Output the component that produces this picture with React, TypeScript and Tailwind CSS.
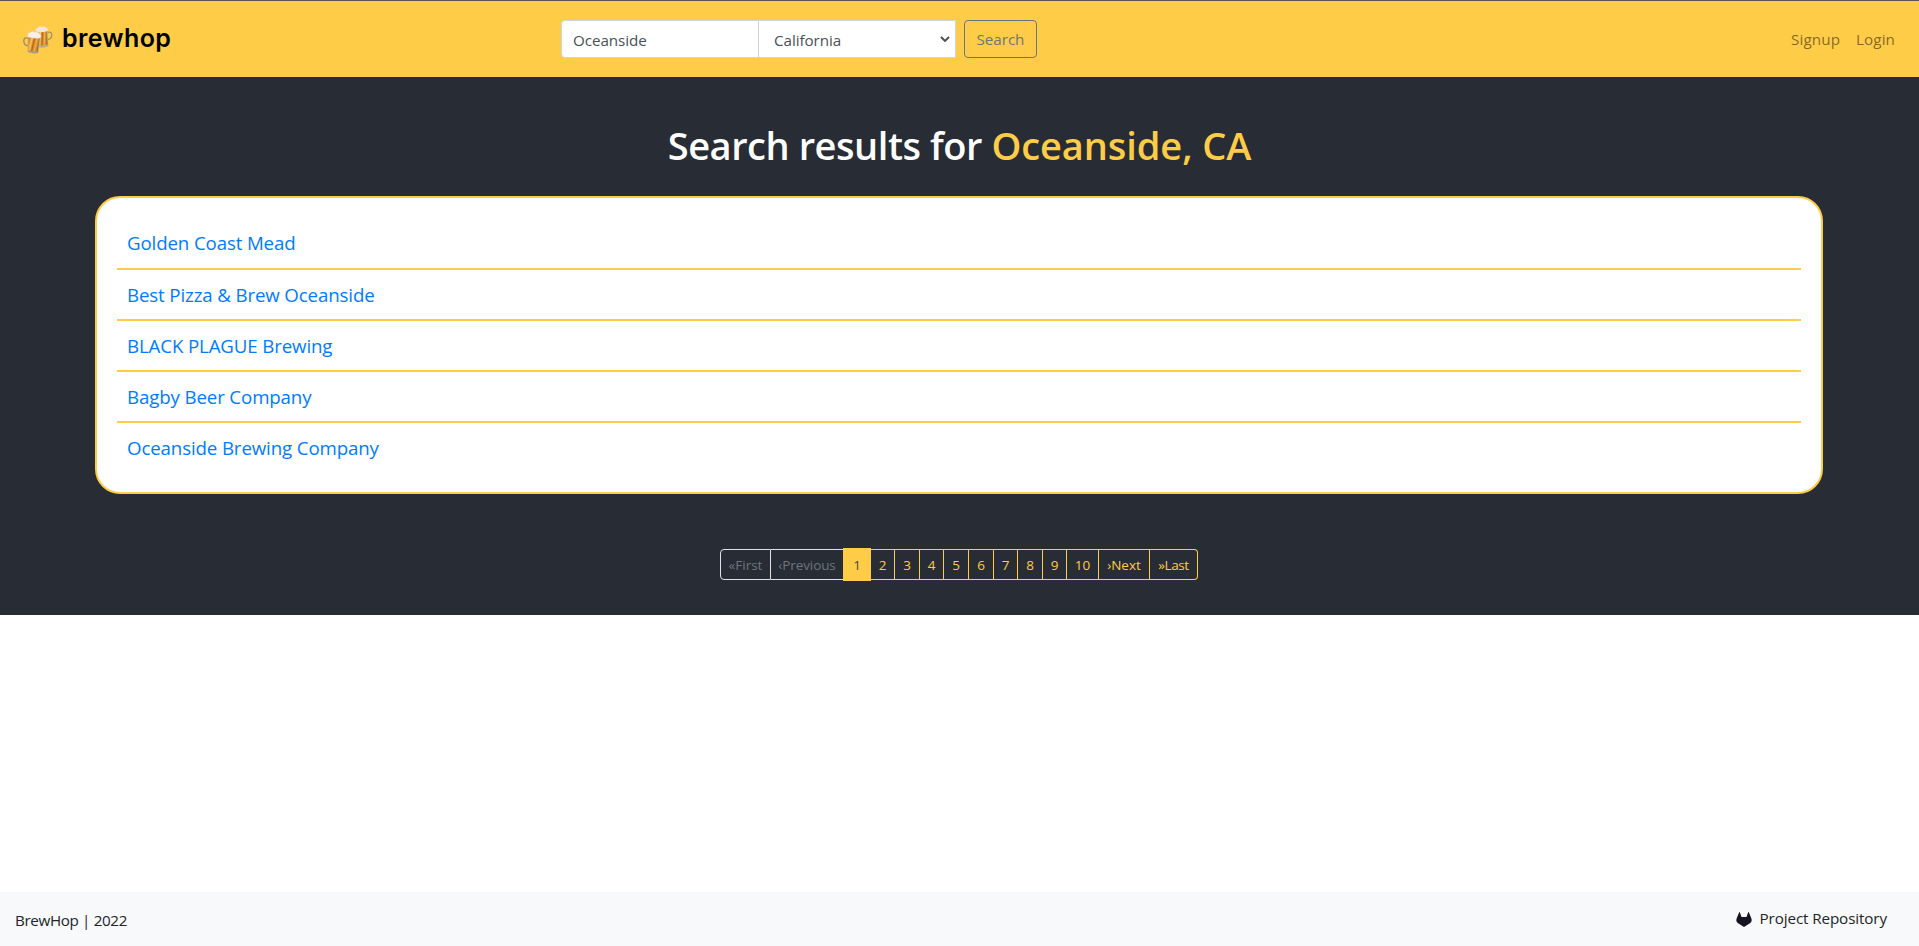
const breweries = [
  "Golden Coast Mead",
  "Best Pizza & Brew Oceanside",
  "BLACK PLAGUE Brewing",
  "Bagby Beer Company",
  "Oceanside Brewing Company",
];

const pages = [
  { label: "2", width: "w-[24px]" },
  { label: "3", width: "w-[25px]" },
  { label: "4", width: "w-[24px]" },
  { label: "5", width: "w-[25px]" },
  { label: "6", width: "w-[25px]" },
  { label: "7", width: "w-[24px]" },
  { label: "8", width: "w-[25px]" },
  { label: "9", width: "w-[24px]" },
  { label: "10", width: "w-[32px]" },
  { label: "›Next", width: "w-[51px]" },
  { label: "»Last", width: "w-[48px] rounded-r tracking-[-0.4px]" },
];

function BeerMugs() {
  return (
    <svg viewBox="0 0 30 28" className="h-7 w-[30px]" aria-hidden="true">
      <defs>
        <linearGradient id="beer" x1="0" x2="1" y1="0" y2="0.2">
          <stop offset="0" stopColor="#b3731f" />
          <stop offset="0.2" stopColor="#e08c22" />
          <stop offset="0.38" stopColor="#f9c65c" />
          <stop offset="0.55" stopColor="#bd6410" />
          <stop offset="0.75" stopColor="#f3b040" />
          <stop offset="1" stopColor="#94642a" />
        </linearGradient>
      </defs>
      <g transform="rotate(-5 19 11)">
        <path d="M24.800 7c3-.8 4.200.2 4.100 2.700-.1 2.500-1.200 4.200-4.300 4.500" fill="none" stroke="#9c946f" strokeWidth="1.300" />
        <path d="M13.700 4h11.200l-.6 16.400q-4.800 1.600-9.800 0Z" fill="url(#beer)" stroke="#cdb486" strokeWidth=".8" />
        <path d="M14.500 18.800q4.800 1.500 9.800 0v1.900q-4.900 1.600-9.800 0Z" fill="#b9ab8c" />
        <path d="M13.300 5.600c-.8-2.800.5-4 2.200-3.900 1.300-1.600 3.200-1.400 4.200-.7 1.700-.9 3.500-.3 3.900.8 1.900.1 2.300 2 1.600 3.800-3.600.9-8 1-11.900 0Z" fill="#f3e3d9" />
      </g>
      <g transform="rotate(5 11 18)">
        <path d="M4.500 12.800c-3.100-.6-4.200.6-3.900 3.100.3 2.800 1.600 4.400 4.500 4.400" fill="none" stroke="#958c6c" strokeWidth="1.300" />
        <path d="M4.300 9h12.500l-1 17.200q-5 1.500-10.200 0Z" fill="url(#beer)" stroke="#cdb486" strokeWidth=".8" />
        <path d="M5.500 24.600q5.200 1.500 10.400 0v2q-5.200 1.600-10.300 0Z" fill="#a99d82" />
        <path d="M4 11.400c-1-3 .5-4.700 2.300-4.600 1.300-1.800 3.700-1.600 4.700-.7 2-.8 3.800-.2 4.300 1.100 2 .1 2.500 2.500 1.600 4.300-4.100 1-8.700 1-12.900-.1Z" fill="#fbefe6" stroke="#d9bfa6" strokeWidth=".4" />
      </g>
    </svg>
  );
}

function GitlabMark() {
  return (
    <svg viewBox="0 0 16 15" className="mt-[6px] mr-2 h-[15px] w-4 text-[#171321]" aria-hidden="true">
      <path d="M3.200.2q.3-.4.600 0L5.500 5h5L12.200.2q.3-.4.600 0L15 5.500l.5 1.400q.7 2.400-1.200 4L8 15 1.700 10.900Q-.2 9.300.5 6.900L1 5.500Z" fill="currentColor" />
    </svg>
  );
}

function Navbar() {
  return (
    <nav className="grid h-[77px] grid-cols-[561px_477px_1fr] items-start border-t border-[#5a5359] bg-[#ffcc47]">
      <a href="#" className="flex pt-[25px] pl-[23px]">
        <BeerMugs />
        <span className="-mt-[5px] ml-[9px] font-['Inter',sans-serif] text-[25px] leading-[34px] font-semibold tracking-[0.4px] text-black">
          brewhop
        </span>
      </a>
      <form className="flex pt-[19px] tracking-[-0.05px] text-[#495057]">
        <div className="flex h-[38px] w-[198px] items-center rounded-l border border-[#ced4da] bg-white pt-0.5 pl-[11px]">
          Oceanside
        </div>
        <div className="flex h-[38px] w-[197px] items-center justify-between border border-l-0 border-[#ced4da] bg-white pt-0.5 pr-[5px] pl-[15px]">
          California
          <svg viewBox="0 0 10 6" className="mb-[3px] h-1.5 w-2.5" aria-hidden="true">
            <path d="M1 1l4 3.900L9 1" fill="none" stroke="#495057" strokeWidth="2" />
          </svg>
        </div>
        <button type="button" className="ml-2 h-[38px] w-[73px] rounded border border-[#6c757d] text-[#6c757d]">
          Search
        </button>
      </form>
      <div className="flex justify-end gap-4 pt-[26px] pr-6 tracking-[0.1px] text-black/50">
        <a href="#">Signup</a>
        <a href="#">Login</a>
      </div>
    </nav>
  );
}

function Pagination() {
  return (
    <div className="mt-[54px] flex h-[33px] items-center justify-center pr-0.5 text-center indent-px text-[13.5px] leading-[30px]">
      <span className="h-[31px] w-[51px] rounded-l border border-[#dee2e6] text-[#6c757d]">«First</span>
      <span className="h-[31px] w-[72px] border-y border-[#dee2e6] tracking-[-0.1px] text-[#6c757d]">‹Previous</span>
      <span className="h-[33px] w-[28px] bg-[#ffcc47] leading-[34px] text-[#4d4636]">1</span>
      {pages.map((p) => (
        <a
          key={p.label}
          href="#"
          className={`h-[31px] border border-l-0 border-[#ffcc47] font-medium text-[#ffcc47] ${p.width}`}
        >
          {p.label}
        </a>
      ))}
    </div>
  );
}

export default function App() {
  return (
    <div className="flex h-[946px] flex-col bg-white font-['Open_Sans','Noto_Sans',sans-serif] text-[15.2px] leading-6">
      <Navbar />
      <main className="h-[538px] bg-[#282c34]">
        <h1 className="pt-[44px] text-center text-[38px] leading-[48px] font-semibold tracking-[-0.45px] text-white">
          Search results for <span className="tracking-[-0.08px] text-[#ffcc47]">Oceanside, CA</span>
        </h1>
        <section className="mt-[27px] ml-[95px] h-[298px] w-[1728px] rounded-[25px] border-2 border-[#ffcc47] bg-white px-5 pt-[21px]">
          {breweries.map((name) => (
            <div
              key={name}
              className="h-[51px] border-b-2 border-[#ffcc47] pt-[10px] pl-[10px] text-[18.7px] leading-[30px] tracking-[-0.13px] text-[#007bff] first:pt-[9px] last:border-b-0"
            >
              <a href="#">{name}</a>
            </div>
          ))}
        </section>
        <Pagination />
      </main>
      <footer className="mt-auto flex h-[54px] justify-between bg-[#f8f9fa] pr-8 pl-[15px] text-[#212529]">
        <span className="pt-4 tracking-[-0.35px]">BrewHop | 2022</span>
        <a href="#" className="flex pt-[14px]">
          <GitlabMark />
          <span className="tracking-[-0.1px]">Project Repository</span>
        </a>
      </footer>
    </div>
  );
}
